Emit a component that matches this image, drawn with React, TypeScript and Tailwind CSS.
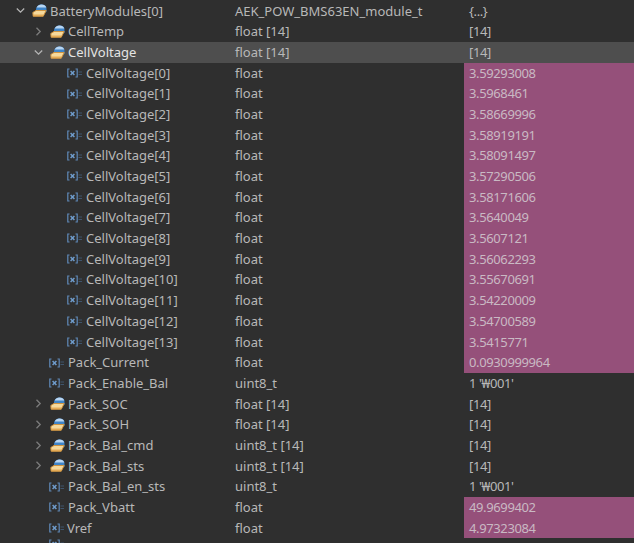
const rows: { n: string; t: string; v: string; d: number; k: "open" | "closed" | "leaf"; pink?: boolean; hi?: boolean }[] = [
  { n: "BatteryModules[0]", t: "AEK_POW_BMS63EN_module_t", v: "{...}", d: 0, k: "open" },
  { n: "CellTemp", t: "float [14]", v: "[14]", d: 1, k: "closed" },
  { n: "CellVoltage", t: "float [14]", v: "[14]", d: 1, k: "open", hi: true },
  { n: "CellVoltage[0]", t: "float", v: "3.59293008", d: 2, k: "leaf", pink: true },
  { n: "CellVoltage[1]", t: "float", v: "3.5968461", d: 2, k: "leaf", pink: true },
  { n: "CellVoltage[2]", t: "float", v: "3.58669996", d: 2, k: "leaf", pink: true },
  { n: "CellVoltage[3]", t: "float", v: "3.58919191", d: 2, k: "leaf", pink: true },
  { n: "CellVoltage[4]", t: "float", v: "3.58091497", d: 2, k: "leaf", pink: true },
  { n: "CellVoltage[5]", t: "float", v: "3.57290506", d: 2, k: "leaf", pink: true },
  { n: "CellVoltage[6]", t: "float", v: "3.58171606", d: 2, k: "leaf", pink: true },
  { n: "CellVoltage[7]", t: "float", v: "3.5640049", d: 2, k: "leaf", pink: true },
  { n: "CellVoltage[8]", t: "float", v: "3.5607121", d: 2, k: "leaf", pink: true },
  { n: "CellVoltage[9]", t: "float", v: "3.56062293", d: 2, k: "leaf", pink: true },
  { n: "CellVoltage[10]", t: "float", v: "3.55670691", d: 2, k: "leaf", pink: true },
  { n: "CellVoltage[11]", t: "float", v: "3.54220009", d: 2, k: "leaf", pink: true },
  { n: "CellVoltage[12]", t: "float", v: "3.54700589", d: 2, k: "leaf", pink: true },
  { n: "CellVoltage[13]", t: "float", v: "3.5415771", d: 2, k: "leaf", pink: true },
  { n: "Pack_Current", t: "float", v: "0.0930999964", d: 1, k: "leaf", pink: true },
  { n: "Pack_Enable_Bal", t: "uint8_t", v: "1 '₩001'", d: 1, k: "leaf" },
  { n: "Pack_SOC", t: "float [14]", v: "[14]", d: 1, k: "closed" },
  { n: "Pack_SOH", t: "float [14]", v: "[14]", d: 1, k: "closed" },
  { n: "Pack_Bal_cmd", t: "uint8_t [14]", v: "[14]", d: 1, k: "closed" },
  { n: "Pack_Bal_sts", t: "uint8_t [14]", v: "[14]", d: 1, k: "closed" },
  { n: "Pack_Bal_en_sts", t: "uint8_t", v: "1 '₩001'", d: 1, k: "leaf" },
  { n: "Pack_Vbatt", t: "float", v: "49.9699402", d: 1, k: "leaf", pink: true },
  { n: "Vref", t: "float", v: "4.97323084", d: 1, k: "leaf", pink: true },
];

function StructIcon() {
  return (
    <svg width="15" height="13" viewBox="0 0 15 13" className="shrink-0">
      <path d="M4 7.5 C3.5 3 6 0.5 9.5 0.5 C12.5 0.5 14.5 2 14.5 4.5 V8 H5 Z" fill="#3f85c9" />
      <path d="M4.6 3.6 C5.6 1.6 7.4 0.5 9.5 0.5 C11.8 0.5 13.6 1.5 14.3 3.6 Z" fill="#b9d6f2" />
      <path d="M0.8 8.5 L4 6.5 H14.2 L11.2 12.3 H1.2 Z" fill="#f5d99c" stroke="#cf9440" strokeWidth="1" />
      <path d="M1.5 11.2 H11.4" stroke="#e0a24a" strokeWidth="1.2" />
    </svg>
  );
}

function VarIcon() {
  return (
    <svg width="18" height="10" viewBox="0 0 18 10" className="shrink-0">
      <path d="M2.5 1 H0.8 V9 H2.5 M8.5 1 H10.2 V9 H8.5" fill="none" stroke="#5f89b8" strokeWidth="1.2" />
      <path d="M3.6 3 L7.4 7 M7.4 3 L3.6 7" stroke="#6f9ccc" strokeWidth="1.5" />
      <path d="M11.5 4 H15 M11.5 6.5 H15" stroke="#3f556d" strokeWidth="1.1" />
    </svg>
  );
}

function Chevron({ open }: { open: boolean }) {
  return (
    <svg width="9" height="9" viewBox="0 0 9 9" className="shrink-0">
      {open ? (
        <path d="M0.8 2.5 L4.5 6.2 L8.2 2.5" fill="none" stroke="#b4b4b4" strokeWidth="1.3" />
      ) : (
        <path d="M2.5 0.8 L6.2 4.5 L2.5 8.2" fill="none" stroke="#7c7c7c" strokeWidth="1.3" />
      )}
    </svg>
  );
}

export default function App() {
  return (
    <div
      className="w-[634px] h-[543px] overflow-hidden bg-[#2f2f2f] text-[#b8b8b8] text-[13px] pt-[0.5px]"
      style={{ fontFamily: '"Noto Sans", "Noto Sans CJK KR", sans-serif' }}
    >
      {rows.map((r) => (
        <div key={r.n} className={`grid grid-cols-[235px_229px_170px] h-[20.7px] leading-[20.7px] ${r.hi ? "bg-[#4e4e4e]" : ""}`}>
          <div className={`flex items-center whitespace-nowrap ${r.d === 0 ? "pl-[16px]" : r.d === 1 ? "pl-[34px]" : "pl-[67px]"} ${r.hi ? "text-[#e4e4e4]" : ""}`}>
            {r.k === "leaf" ? (
              <span className={`flex items-center ${r.d === 1 ? "pl-[15px] gap-[1px]" : "gap-[1px]"}`}>
                <VarIcon />
                <span className={r.n === "Vref" ? "-ml-[1px]" : ""}>{r.n}</span>
              </span>
            ) : (
              <span className="flex items-center">
                <Chevron open={r.k === "open"} />
                <span className="ml-[7px] mr-[3px] flex">
                  <StructIcon />
                </span>
                <span>{r.n}</span>
              </span>
            )}
          </div>
          <div className="whitespace-nowrap">{r.t}</div>
          <div className={`pl-[5px] whitespace-nowrap tracking-[-0.38px] ${r.pink ? "bg-[#95507a] text-[#c9b9c3]" : ""}`}>{r.v}</div>
        </div>
      ))}
      <div className="h-[20px] pl-[49px] pt-[1px]">
        <VarIcon />
      </div>
    </div>
  );
}
